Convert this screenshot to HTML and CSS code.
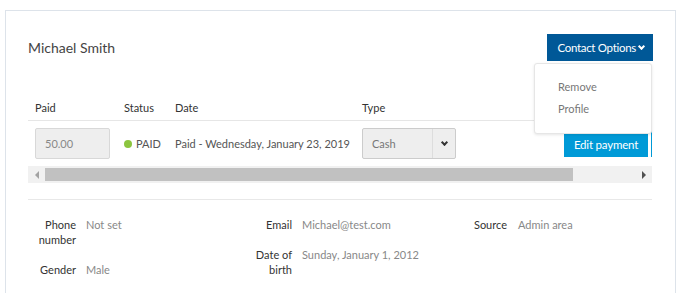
FILE: index.html
```html
<!DOCTYPE html>
<html>
<head>
  <title>Contact - Michael Smith</title>
  <link rel="stylesheet" href="styles.css">
</head>
<body>
  <div class="card">
    <div class="card-header">
      <h2>Michael Smith</h2>
      <div class="options">
        <button class="options-btn">Contact Options<span class="caret"></span></button>
        <div class="options-menu">
          <div class="menu-item">Remove</div>
          <div class="menu-item">Profile</div>
        </div>
      </div>
    </div>

    <div class="payments">
      <div class="row head">
        <div class="cell col-paid">Paid</div>
        <div class="cell col-status">Status</div>
        <div class="cell col-date">Date</div>
        <div class="cell col-type">Type</div>
        <div class="cell col-action"></div>
      </div>
      <div class="row">
        <div class="cell col-paid"><div class="amount">50.00</div></div>
        <div class="cell col-status"><span class="dot"></span>PAID</div>
        <div class="cell col-date">Paid - Wednesday, January 23, 2019</div>
        <div class="cell col-type">
          <div class="select">
            <span class="select-value">Cash</span>
            <span class="select-arrow"><span class="caret dark"></span></span>
          </div>
        </div>
        <div class="cell col-action">
          <button class="edit-btn">Edit payment</button>
          <button class="more-btn"></button>
        </div>
      </div>
    </div>
    <div class="scrollbar">
      <span class="arrow left"></span>
      <span class="thumb"></span>
      <span class="rest"></span>
      <span class="arrow right"></span>
    </div>

    <div class="details">
      <div class="details-col first">
        <div class="field"><span class="label">Phone number</span><span class="value">Not set</span></div>
        <div class="field"><span class="label">Gender</span><span class="value">Male</span></div>
      </div>
      <div class="details-col second">
        <div class="field"><span class="label">Email</span><span class="value">Michael@test.com</span></div>
        <div class="field"><span class="label">Date of birth</span><span class="value">Sunday, January 1, 2012</span></div>
      </div>
      <div class="details-col third">
        <div class="field"><span class="label">Source</span><span class="value">Admin area</span></div>
      </div>
    </div>
  </div>
</body>
</html>
```

FILE: styles.css
```css
body {
  margin: 0;
  background: #fff;
  font-family: Lato, "Open Sans", sans-serif;
  color: #333;
  font-size: 11px;
}

.card {
  box-sizing: border-box;
  width: 671px;
  min-height: 290px;
  margin: 10px 0 0 5px;
  padding: 23px 23px 0 22px;
  border: 1px solid #dde3ea;
  border-bottom: none;
}

.card-header {
  display: flex;
  justify-content: space-between;
  align-items: center;
  height: 27px;
}

h2 {
  margin: 0;
  font-size: 14px;
  font-weight: 400;
  color: #444;
}

.options {
  position: relative;
  margin-right: -1px;
}

.options-btn {
  display: flex;
  align-items: center;
  height: 27px;
  padding: 0 9px 0 10px;
  border: none;
  background: #005897;
  color: #fff;
  font-family: inherit;
  font-size: 11.5px;
  letter-spacing: -0.3px;
}

.caret {
  display: inline-block;
  width: 3px;
  height: 3px;
  margin: -3px 0 0 3px;
  border-right: 2px solid #fff;
  border-bottom: 2px solid #fff;
  transform: rotate(45deg);
}

.caret.dark {
  border-color: #333;
  margin: -3px 0 0 0;
}

.options-menu {
  position: absolute;
  top: 29px;
  right: 1px;
  width: 118px;
  box-sizing: border-box;
  padding: 12px 0 13px 23px;
  background: #fff;
  border: 1px solid #e6e6e6;
  border-radius: 3px;
  box-shadow: 0 1px 3px rgba(0, 0, 0, 0.1);
  z-index: 2;
}

.menu-item {
  line-height: 22px;
  color: #777;
  font-size: 11px;
}

.payments {
  margin-top: 33px;
  width: 624px;
  overflow: hidden;
}

.row {
  display: flex;
  align-items: center;
  width: 700px;
  height: 45px;
}

.row.head {
  height: 26px;
  border-bottom: 1px solid #e6e6e6;
  width: 624px;
}

.cell {
  flex-shrink: 0;
  box-sizing: border-box;
  padding-left: 6px;
  white-space: nowrap;
  display: flex;
  align-items: center;
}

.row .cell {
  color: #555;
}

.row.head .cell {
  color: #333;
}

.col-paid { width: 90px; padding-left: 7px; }
.col-status { width: 51px; }
.col-date { width: 186px; }
.col-type { width: 203px; padding-left: 7px; }
.col-action { gap: 3px; }

.amount {
  box-sizing: border-box;
  width: 75px;
  height: 31px;
  line-height: 29px;
  padding-left: 9px;
  background: #eee;
  border: 1px solid #d8d8d8;
  border-radius: 2px;
  color: #888;
}

.dot {
  width: 8px;
  height: 8px;
  border-radius: 50%;
  background: #8cc53f;
  margin-right: 4px;
}

.select {
  display: flex;
  box-sizing: border-box;
  width: 94px;
  height: 31px;
  background: #eee;
  border: 1px solid #ccc;
  border-radius: 2px;
}

.select-value {
  flex: 1;
  line-height: 29px;
  padding-left: 9px;
  color: #777;
}

.select-arrow {
  width: 22px;
  display: flex;
  align-items: center;
  justify-content: center;
  border-left: 1px solid #ddd;
}

.edit-btn {
  box-sizing: border-box;
  width: 84px;
  height: 25px;
  padding: 0;
  border: none;
  background: #009ad7;
  color: #fff;
  font-family: inherit;
  font-size: 11.5px;
  letter-spacing: -0.2px;
  margin-top: 2px;
}

.more-btn {
  width: 30px;
  height: 27px;
  padding: 0;
  border: 1px solid #009ad7;
  background: #fff;
}

.scrollbar {
  display: flex;
  align-items: center;
  width: 624px;
  height: 17px;
  background: #f1f1f1;
}

.arrow {
  width: 17px;
  height: 17px;
  display: flex;
  align-items: center;
  justify-content: center;
}

.arrow::before {
  content: "";
  border-top: 4px solid transparent;
  border-bottom: 4px solid transparent;
}

.arrow.left::before {
  border-right: 4px solid #a3a3a3;
}

.arrow.right::before {
  border-left: 4px solid #505050;
}

.thumb {
  width: 528px;
  height: 13px;
  background: #c1c1c1;
}

.rest {
  flex: 1;
}

.details {
  display: flex;
  margin-top: 16px;
  padding-top: 17px;
  border-top: 1px solid #e8e8e8;
  width: 624px;
}

.details-col {
  display: flex;
  flex-direction: column;
  gap: 15px;
}

.details-col.first { width: 216px; }
.details-col.second { width: 215px; }
.details-col.third { width: 193px; }

.field {
  display: flex;
  line-height: 15px;
}

.label {
  width: 48px;
  text-align: right;
  color: #333;
  flex-shrink: 0;
}

.value {
  margin-left: 10px;
  color: #888;
}

.third .value {
  margin-left: 11px;
}
```
